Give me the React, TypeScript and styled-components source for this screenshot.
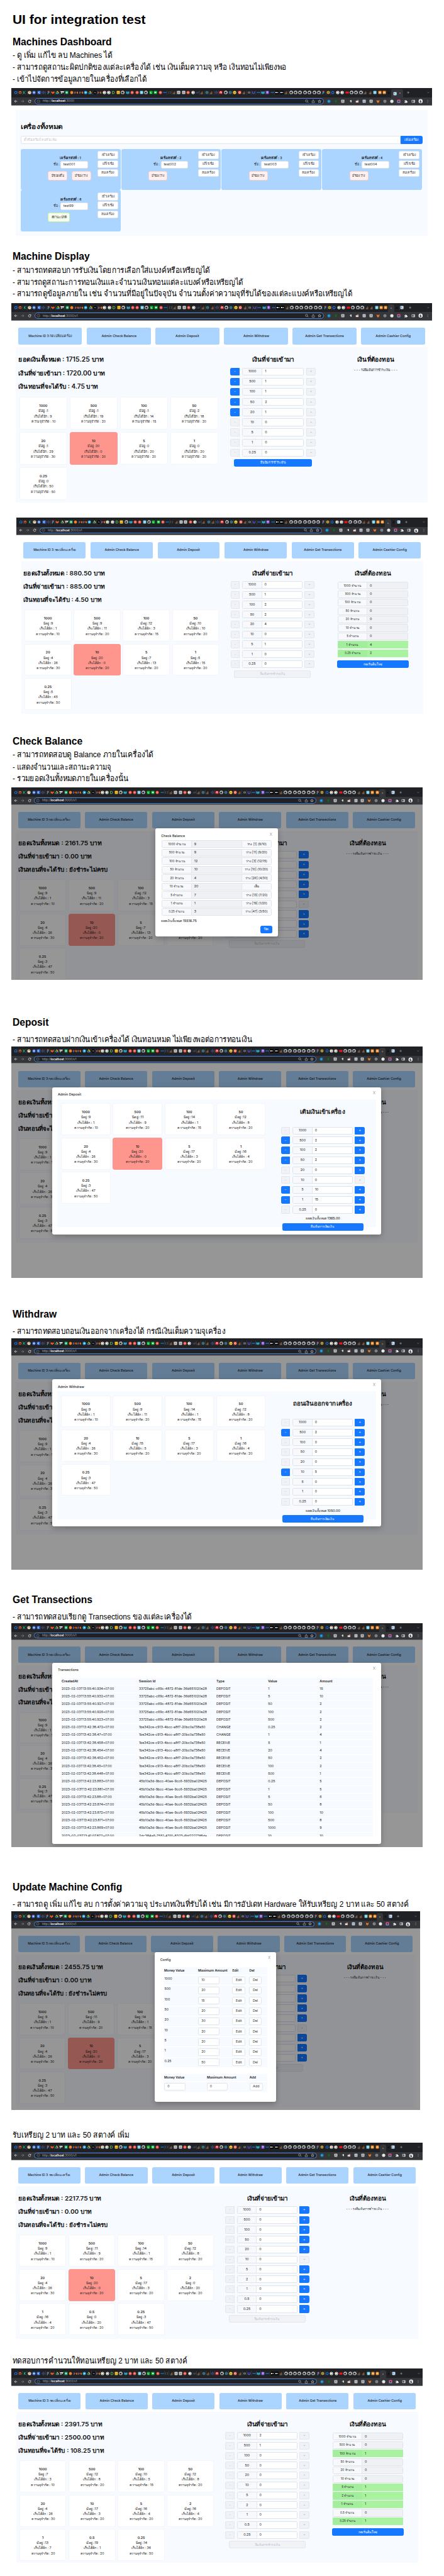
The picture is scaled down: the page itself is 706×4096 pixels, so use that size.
import React, { useLayoutEffect, useRef, useState } from "react";
import styled, { createGlobalStyle, css } from "styled-components";

/* document units: the page is designed on an 806px wide sheet */
const UNIT = 0.876;
const u = (n: number) => `${+(n * UNIT).toFixed(3)}px`;
/* browser-window units: --k horizontal, --v vertical size of one CSS pixel */
const s = (n: number) => `calc(${n} * var(--k))`;
const v = (n: number) => `calc(${n} * var(--v))`;

const Global = createGlobalStyle`
  *, *::before, *::after { box-sizing: border-box; }
  html, body { margin: 0; background: #fff; }
`;

/* ---------- text set to a given measure ---------- */
const Measured = styled.span<{ $left?: boolean }>`
  display: inline-block;
  flex: none;
  white-space: nowrap;
  transform-origin: ${(p) => (p.$left ? "left" : "center")} center;
`;
function Fit({ w, doc, left, children }: { w: number; doc?: boolean; left?: boolean; children: React.ReactNode }) {
  const ref = useRef<HTMLSpanElement>(null);
  const [ratio, setRatio] = useState(1);
  useLayoutEffect(() => {
    const el = ref.current;
    if (!el) return;
    const range = document.createRange();
    range.selectNodeContents(el);
    const old = el.style.transform;
    el.style.transform = "none";
    const natural = range.getBoundingClientRect().width;
    el.style.transform = old;
    const unit = doc ? UNIT : parseFloat(getComputedStyle(el).getPropertyValue("--k"));
    if (natural > 0 && unit > 0) setRatio((w * unit) / natural);
  }, [w, doc]);
  return (
    <Measured ref={ref} $left={left} style={{ transform: `scaleX(${ratio})` }}>
      {children}
    </Measured>
  );
}

/* ---------- document ---------- */
const Page = styled.main`
  width: ${u(806)};
  height: 4096px;
  overflow: hidden;
  padding: ${u(20)} 0 0 ${u(20)};
  display: flex;
  flex-direction: column;
  align-items: flex-start;
  font-family: "Liberation Sans", Arial, sans-serif;
  color: #000;
`;
const Title = styled.h1`
  margin: 0 0 0 ${u(2.6)};
  height: ${u(30)};
  line-height: ${u(30)};
  font-size: ${u(24)};
  flex: none;
  white-space: nowrap;
`;
const HeadingBox = styled.h2<{ $gap: number }>`
  margin: ${(p) => u(p.$gap)} 0 0 ${u(2.6)};
  height: ${u(20)};
  line-height: ${u(20)};
  font-size: ${u(18)};
  flex: none;
  white-space: nowrap;
`;
const LineBox = styled.p<{ $gap: number }>`
  margin: ${(p) => u(p.$gap)} 0 0 ${u(2.4)};
  height: ${u(20)};
  line-height: ${u(20)};
  font-size: ${u(14.67)};
  flex: none;
  white-space: nowrap;
`;
interface TextProps {
  gap: number;
  w: number;
  children: React.ReactNode;
}
const Heading = ({ gap, w, children }: TextProps) => (
  <HeadingBox $gap={gap}>
    <Fit doc left w={w}>
      {children}
    </Fit>
  </HeadingBox>
);
const Line = ({ gap, w, children }: TextProps) => (
  <LineBox $gap={gap}>
    <Fit doc left w={w}>
      {children}
    </Fit>
  </LineBox>
);

/* ---------- browser window ---------- */
const Window = styled.section<{ $gap: number; $w: number; $h: number; $v?: number; $left?: number }>`
  --k: ${(p) => ((p.$w * UNIT) / 1728).toFixed(5)}px;
  --v: ${(p) => ((p.$v ?? p.$w / 1728) * UNIT).toFixed(5)}px;
  position: relative;
  flex: none;
  overflow: hidden;
  margin: ${(p) => u(p.$gap)} 0 0 ${(p) => u(p.$left ?? 0)};
  width: ${(p) => u(p.$w)};
  height: ${(p) => u(p.$h)};
  font-family: Inter, Roboto, sans-serif;
  font-size: ${s(14)};
  color: #222;
  display: flex;
  flex-direction: column;
`;
const TabStrip = styled.div`
  height: ${v(38)};
  flex: none;
  background: #202124;
  display: flex;
  align-items: center;
  padding-left: ${s(9)};
`;
const Favicons = styled.div<{ $w: number }>`
  width: ${(p) => s(p.$w)};
  display: flex;
  justify-content: space-between;
  align-items: center;
`;
const Glyph = styled.svg<{ $size: number }>`
  width: ${(p) => s(p.$size)};
  height: ${(p) => s(p.$size)};
  flex: none;
  display: block;
`;
const ActiveTab = styled.div<{ $w: number }>`
  width: ${(p) => s(p.$w)};
  height: ${v(32)};
  align-self: flex-end;
  border-radius: ${s(8)} ${s(8)} 0 0;
  background: #35363a;
  display: flex;
  align-items: center;
  justify-content: space-evenly;
`;
const TabTail = styled.div`
  flex: 1;
  display: flex;
  justify-content: space-between;
  padding: 0 ${s(12)} 0 ${s(16)};
`;
const Toolbar = styled.div`
  height: ${v(34)};
  flex: none;
  background: #35363a;
  border-bottom: 1px solid #77787b;
  display: flex;
  align-items: center;
  padding: 0 ${s(10)} ${v(1)} ${s(11)};
  gap: ${s(13)};
`;
const Address = styled.div`
  margin-left: ${s(-1)};
  width: ${s(1187)};
  height: ${v(26)};
  border: 1px solid #4d7fd6;
  border-radius: ${s(13)};
  background: #202124;
  display: flex;
  align-items: center;
  gap: ${s(10)};
  padding: 0 ${s(8)} 0 ${s(6)};
  color: #9aa0a6;
  font-size: ${s(13.5)};
  line-height: 1;
  white-space: nowrap;
  b { color: #fff; font-weight: 600; }
`;
const Url = styled.span`
  flex: 1;
`;
const Extensions = styled.div`
  flex: 1;
  display: flex;
  justify-content: space-between;
  align-items: center;
`;

const SO = (
  <g>
    <path d="M3 9v5h8V9" stroke="#9a8f88" strokeWidth="1.4" fill="none" />
    <path d="M5 11.5h5M5 9l5 1M6 6l4.500 2.500M8.500 3l3.500 4" stroke="#f48024" strokeWidth="1.400" />
  </g>
);
const GH = (
  <path
    d="M8 1.500a6.500 6.500 0 0 0-2 12.700v-2c-2 .4-2.300-1.200-2.800-1.600M10 14.200v-2.400c0-.8-.2-1.200-.5-1.500 2-.3 3.200-1.200 3.200-3.400 0-1-.3-1.600-.8-2.200.2-.6.100-1.300-.1-1.900-.8 0-1.500.5-2 .9a7 7 0 0 0-3.600 0c-.5-.4-1.200-.9-2-.9-.2.600-.3 1.300-.1 1.900-.5.600-.8 1.200-.8 2.200M10 14.200a6.500 6.500 0 0 0-2-12.700"
    fill="none"
    stroke="#f2f2f2"
    strokeWidth="2"
  />
);
const box = (fill: string, inner?: React.ReactNode) => (
  <g>
    <rect x="1.500" y="1.500" width="13" height="13" rx="2" fill={fill} />
    {inner}
  </g>
);
const disc = (fill: string, inner?: React.ReactNode) => (
  <g>
    <circle cx="8" cy="8" r="6.800" fill={fill} />
    {inner}
  </g>
);
const lines = (c: string) => <path d="M4 5.500h8M4 8h8M4 10.500h8" stroke={c} strokeWidth="1.300" />;

const ICONS: Record<string, React.ReactNode> = {
  swirl: <path d="M4 11a5 5 0 1 1 4 2.300V10M5.500 13H3" stroke="#1f7cf5" strokeWidth="2.600" fill="none" />,
  fire: (
    <g>
      <circle cx="8" cy="8" r="5" stroke="#e2592a" strokeWidth="2.600" fill="none" />
      <circle cx="8" cy="6" r="1.800" fill="#f7b26a" />
    </g>
  ),
  k: <path d="M4 2v12M12 2L5 8l7 6" stroke="#18b877" strokeWidth="2.400" fill="none" />,
  face: disc("#e8d8bf", <circle cx="9" cy="6" r="3" fill="#a7825f" />),
  blue: disc("#4b7fe8", <circle cx="8" cy="8" r="3" fill="#cfe0ff" />),
  share: box("#2f6fe8", <path d="M11 4L5 8l6 4" stroke="#fff" strokeWidth="1.800" fill="none" />),
  diamond: (
    <g>
      <path d="M8 1.500L14.500 8 8 14.500 1.500 8z" fill="none" stroke="#2e6fd2" strokeWidth="2" />
      <circle cx="8" cy="8" r="2" fill="#e23c48" />
    </g>
  ),
  figma: (
    <g>
      <rect x="4" y="1" width="4" height="5" rx="2" fill="#f24e1e" />
      <rect x="8" y="1" width="4" height="5" rx="2" fill="#ff7262" />
      <rect x="4" y="6" width="4" height="4.500" rx="2" fill="#a259ff" />
      <circle cx="10" cy="8.200" r="2.200" fill="#1abcfe" />
      <rect x="4" y="10.500" width="4" height="4.500" rx="2" fill="#0acf83" />
    </g>
  ),
  gitlab: (
    <g>
      <path d="M1 8.500L3.500 2l2 4.500h5l2-4.500L15 8.500 8 14.500z" fill="#fc6d26" />
      <path d="M5.500 6.500h5L8 14.500z" fill="#e24329" />
    </g>
  ),
  drive: (
    <g>
      <path d="M6 2h4l5 8.500h-4.500z" fill="#fbbc04" />
      <path d="M6 2l2 3.500L3.500 14 1 10.500z" fill="#1fa463" />
      <path d="M5 10.500h10L13 14H3z" fill="#4285f4" />
    </g>
  ),
  tt: <path d="M1 4h14M5 4v9M11 4v6" stroke="#f5f5f5" strokeWidth="3.200" />,
  sheet: box("#17a35e", <path d="M4 8h8M8 4v8" stroke="#fff" strokeWidth="2.200" />),
  hex: <path d="M8 1l6 3.500v7L8 15l-6-3.500v-7z" fill="#f58220" />,
  gmail: (
    <g>
      <path d="M2.500 13V4.500L8 9l5.500-4.500V13" fill="none" stroke="#ea4335" strokeWidth="2.400" />
      <path d="M2.500 13V5.500" stroke="#4285f4" strokeWidth="2.400" />
      <path d="M13.500 13V5.500" stroke="#fbbc04" strokeWidth="2.400" />
    </g>
  ),
  tele: disc("#2da5e1", <path d="M4 8l8-3-2 6-2-2z" fill="#fff" />),
  next: disc("#000", <path d="M6 11V5.500l4.500 5.500V5.500" stroke="#ccc" strokeWidth="1.200" fill="none" />),
  google: (
    <g>
      <circle cx="8" cy="8" r="6.800" fill="#fff" />
      <path d="M12 6A4.200 4.200 0 0 0 5 5" stroke="#ea4335" strokeWidth="2" fill="none" />
      <path d="M4.600 6a4.500 4.500 0 0 0 0 4" stroke="#fbbc04" strokeWidth="2" fill="none" />
      <path d="M5 11a4.200 4.200 0 0 0 6 .2" stroke="#34a853" strokeWidth="2" fill="none" />
      <path d="M8 8h4.500c0 1.500-.5 2.500-1.500 3.200" stroke="#4285f4" strokeWidth="2" fill="none" />
    </g>
  ),
  d: <path d="M4 3h4a5 5 0 0 1 0 10H4z" stroke="#6fcf5a" strokeWidth="2.200" fill="none" />,
  yellow: box("#ffc72c", <path d="M4 9h8" stroke="#a4750a" strokeWidth="2" />),
  gh: GH,
  book: <path d="M1.500 3l6.500 2v9.500L1.500 12zM14.500 3L8 5v9.500l6.500-2.500z" fill="#35b1cf" stroke="#1c6f8d" />,
  red: disc("#e4483d", <circle cx="8" cy="8" r="2.800" fill="none" stroke="#ffd3cd" strokeWidth="1.600" />),
  gopher: box("#74cfe8", <path d="M6 5v3M10 5v3M6 11h4" stroke="#fff" strokeWidth="1.800" />),
  green: box("#06b526", <path d="M6 5v6h4" stroke="#fff" strokeWidth="1.800" fill="none" />),
  line: box("#06c233", <rect x="4" y="5" width="8" height="5" rx="2" fill="#fff" />),
  dash: <path d="M1 8h14" stroke="#1b74c9" strokeWidth="3.400" />,
  brackets: <path d="M6 4H4v8h2M10 4h2v8h-2" stroke="#8d9095" strokeWidth="1.200" fill="none" />,
  so: SO,
  white: box("#e9e9e9", lines("#3a3a3a")),
  infinity: <path d="M3 4v8l3-4 3 4V4M9 12l4-8v8" stroke="#4a5f80" strokeWidth="1.400" fill="none" />,
  react: (
    <g fill="none" stroke="#4fa9c4" strokeWidth="1.100">
      <ellipse cx="8" cy="8" rx="6.500" ry="2.600" />
      <ellipse cx="8" cy="8" rx="6.500" ry="2.600" transform="rotate(60 8 8)" />
      <ellipse cx="8" cy="8" rx="6.500" ry="2.600" transform="rotate(120 8 8)" />
    </g>
  ),
  npm: box("#d80d0d", <path d="M5 12V5h6v7" stroke="#fff" strokeWidth="2.400" fill="none" />),
  sun: disc("#f3cd3a", <path d="M4 9h8" stroke="#6d5b12" strokeWidth="2" />),
  reddit: box("#e0392b", <circle cx="8" cy="8" r="3.600" fill="none" stroke="#fff" strokeWidth="2" />),
  gray: <path d="M4 5h8v6H4zM8 5v6" stroke="#a5a8ad" strokeWidth="1.500" fill="none" />,
  u: <path d="M4 3v6a4 4 0 0 0 8 0V3" stroke="#5f55e8" strokeWidth="3" fill="none" />,
  purple: box("#8152d9", <path d="M8 4v8M5 7l3-3 3 3" stroke="#fff" strokeWidth="1.800" fill="none" />),
  medium: (
    <g>
      <rect x="0" y="1" width="16" height="14" fill="#000" />
      <circle cx="5" cy="8" r="3" fill="#fff" />
      <circle cx="11.500" cy="8" r="2.200" fill="#fff" />
    </g>
  ),
  grad: <circle cx="8" cy="8" r="5" stroke="#e8922c" strokeWidth="3" fill="#35a852" />,
  yt: <rect x="1" y="4" width="14" height="8.500" rx="2" fill="#f01414" />,
  orange: box("#f28a1c", <path d="M8 4v3M5 11V8h6v3" stroke="#fff" strokeWidth="1.900" fill="none" />),
  dark: <path d="M3 12l5-8 5 8z" fill="#101012" />,
  paper: box("#cfe6fb", <path d="M5 11V5l6 6" stroke="#2f73c0" strokeWidth="1.700" fill="none" />),
  globe: disc("#147eb8", <path d="M4 8l4-4 3 5-4 3z" fill="#30b4e6" />),
  down: <path d="M5 2h6v6h3l-6 6-6-6h3z" fill="#0b6e17" />,
  lens: box("#c9c9c9", <path d="M5 12l3-8 3 8" stroke="#4a4a4a" strokeWidth="1.500" fill="none" />),
  bird: <path d="M2 6l5 1 1-4h5v9H9V9z" fill="#dedede" />,
  tv: <path d="M2 6h11v7H2zM6 3h7v3" fill="#efe7e4" stroke="#b56d5f" />,
  kit: box("#c2cad6", <path d="M4 5l2 6 2-5 2 5 2-6" stroke="#6a7686" fill="none" />),
  fox: <path d="M2 2l5 3h2l5-3-1 8-3 4H6l-3-4z" fill="#e27625" />,
  ring: <circle cx="8" cy="8" r="5.500" fill="#77797d" stroke="#b9bbbe" strokeWidth="1.400" />,
  snow: disc("#e6e6e6"),
  color: (
    <g>
      {box("#eb4b7b", <path d="M2 14V4l6 10zM8 14h6V8z" fill="#25a9f0" />)}
      <rect x="5.500" y="5.500" width="5" height="5" fill="#35363a" />
    </g>
  ),
  puzzle: <path d="M2 5h4a2 2 0 1 1 4 0h3v4a2 2 0 1 1 0 3v2H3v-4a2 2 0 1 0 0-2z" fill="#e8eaed" />,
  panel: <path d="M2.500 3.500h11v9h-11zM10 3.500v9h3.500v-9z" stroke="#e8eaed" strokeWidth="1.800" fill="none" />,
  avatar: disc("#eceff1", <path d="M7 3l2 3 2 6-5 2-1-6z" fill="#4a4f57" />),
  dots: <path d="M8 2.500v2M8 7v2M8 11.500v2" stroke="#bdc1c6" strokeWidth="2" />,
  back: <path d="M14 8H3M8 3L3 8l5 5" stroke="#dee1e6" strokeWidth="2" fill="none" />,
  fwd: <path d="M2 8h11M8 3l5 5-5 5" stroke="#85878b" strokeWidth="1.800" fill="none" />,
  reload: <path d="M13 9a5 5 0 1 1-1.500-4.500L13 6V2.500M13 6H9.500" stroke="#dee1e6" strokeWidth="2" fill="none" />,
  info: <path d="M8 7v4M8 4.500v1M14 8A6 6 0 1 1 2 8a6 6 0 0 1 12 0z" stroke="#9aa0a6" strokeWidth="1.200" fill="none" />,
  zoom: <path d="M10 10l4 4M11 6.500a4.500 4.500 0 1 1-9 0 4.500 4.500 0 0 1 9 0z" stroke="#bdc1c6" strokeWidth="1.700" fill="none" />,
  upload: <path d="M5 7H3v7h10V7h-2M8 10V2M5.500 4L8 2l2.500 2" stroke="#bdc1c6" strokeWidth="1.500" fill="none" />,
  star: <path d="M8 2l1.800 4 4.200.400-3.200 2.800 1 4.300L8 11.200l-3.800 2.300 1-4.300L2 6.400 6.200 6z" stroke="#dee1e6" strokeWidth="1.500" fill="none" />,
  close: <path d="M4 4l8 8M12 4l-8 8" stroke="#c4c7cc" strokeWidth="1.500" />,
  plus: <path d="M8 1.500v13M1.500 8h13" stroke="#dee1e6" strokeWidth="1.800" />,
  chevron: <path d="M3 6l5 5 5-5" stroke="#c4c7cc" strokeWidth="2" fill="none" />,
};
const Icon = ({ name, size = 16 }: { name: string; size?: number }) => (
  <Glyph viewBox="0 0 16 16" $size={size} aria-hidden>
    {ICONS[name]}
  </Glyph>
);

const TABS =
  "swirl fire k face blue share diamond figma gitlab drive tt sheet hex gmail gmail tele drive next gmail google google d yellow gh book red red gopher gh green line red dash brackets so white white red google infinity so react so diamond npm gh react sun reddit so gray u dash book purple dash medium medium so gh gh gh gh gh gh gh figma grad swirl google google yt gh gh gh so so gopher orange orange".split(
    " "
  );
const SEPARATED = new Set([0, 1, 2, 5, 6, 7, 8, 9, 10, 16, 17, 18, 32, 33, 34, 39, 40, 41, 42, 43, 46, 49, 50, 51, 52, 53, 55, 58, 65, 66, 67, 73, 74]);
const EXT = "globe down lens bird tv kit lens fox ring snow color puzzle panel avatar dots".split(" ");

const TabSlot = styled.span<{ $line?: boolean }>`
  flex: 1;
  display: flex;
  justify-content: center;
  align-items: center;
  height: ${v(18)};
  ${(p) =>
    p.$line &&
    css`
      background: linear-gradient(#4c4e52, #4c4e52) right center / 0.5px 100% no-repeat;
    `}
`;

function Chrome({ path = "" }: { path?: string }) {
  const home = path === "";
  return (
    <>
      <TabStrip>
        <Favicons $w={home ? 1550 : 1538}>
          {(home ? [...TABS, "dark"] : TABS).map((t, i) => (
            <TabSlot key={i} $line={SEPARATED.has(i)}>
              <Icon name={t} />
            </TabSlot>
          ))}
        </Favicons>
        <ActiveTab $w={home ? 50 : 26}>
          {home && <Icon name="paper" />}
          <Icon name="close" size={11} />
        </ActiveTab>
        {!home && (
          <Favicons $w={42}>
            <TabSlot $line>
              <Icon name="dark" />
            </TabSlot>
            <TabSlot>
              <Icon name="paper" />
            </TabSlot>
          </Favicons>
        )}
        <TabTail>
          <Icon name="plus" size={11} />
          <Icon name="chevron" size={10} />
        </TabTail>
      </TabStrip>
      <Toolbar>
        <Icon name="back" />
        <Icon name="fwd" />
        <Icon name="reload" />
        <Address>
          <Icon name="info" />
          <Url>
            <Fit left w={home ? 129 : 144}>
              http://<b>localhost</b>:3000{path}
            </Fit>
          </Url>
          <Icon name="zoom" />
          <Icon name="upload" />
          <Icon name="star" />
        </Address>
        <Extensions>
          {EXT.map((e, i) => (
            <Icon key={i} name={e} size={e === "avatar" ? 20 : 16} />
          ))}
        </Extensions>
      </Toolbar>
    </>
  );
}

/* ---------- controls ---------- */
const Button = styled.button<{ $kind?: "primary" | "off" | "plain"; $w?: number; $side?: "l" | "r" }>`
  width: ${(p) => (p.$w ? s(p.$w) : "auto")};
  height: ${v(32)};
  flex: none;
  padding: 0;
  font: inherit;
  line-height: 1;
  white-space: nowrap;
  display: flex;
  align-items: center;
  justify-content: center;
  border: 1px solid #e3e6ea;
  border-radius: ${(p) => (p.$side === "l" ? `${s(6)} 0 0 ${s(6)}` : p.$side === "r" ? `0 ${s(6)} ${s(6)} 0` : s(6))};
  background: #fff;
  color: #333;
  ${(p) =>
    p.$kind === "primary" &&
    css`
      border-color: #1677ff;
      background: #1677ff;
      color: #fff;
    `}
  ${(p) =>
    p.$kind === "off" &&
    css`
      background: #f0f2f6;
      color: #b9bbbf;
    `}
`;
const Field = styled.div<{ $w?: number; $off?: boolean }>`
  width: ${(p) => (p.$w ? s(p.$w) : "auto")};
  flex: ${(p) => (p.$w ? "none" : 1)};
  height: ${v(32)};
  padding: 0 ${s(10)};
  border: 1px solid #e1e4e9;
  border-radius: ${s(6)};
  background: ${(p) => (p.$off ? "#f0f2f6" : "#fff")};
  display: flex;
  align-items: center;
  line-height: 1;
  font-weight: 400;
  color: #333;
`;
const Group = styled.div<{ $w: number; $mark?: boolean }>`
  width: ${(p) => s(p.$w)};
  height: ${v(32)};
  flex: none;
  display: flex;
  border: 1px solid ${(p) => (p.$mark ? "#a9f3a0" : "#e0e3e8")};
  border-radius: ${(p) => (p.$mark ? "0" : s(6))};
  overflow: hidden;
  background: ${(p) => (p.$mark ? "#a9f3a0" : "#fff")};
`;
const Addon = styled.span<{ $w: number; $right?: boolean; $mark?: boolean }>`
  width: ${(p) => s(p.$w)};
  display: flex;
  align-items: center;
  justify-content: center;
  line-height: 1;
  white-space: nowrap;
  background: ${(p) => (p.$mark ? "#a3ee9c" : "#f7f9fc")};
  ${(p) => (p.$right ? "border-left" : "border-right")}: 1px solid ${(p) => (p.$mark ? "#a3ee9c" : "#e3e6ea")};
`;
const GroupValue = styled.span<{ $off?: boolean }>`
  flex: 1;
  display: flex;
  align-items: center;
  padding-left: ${s(10)};
  line-height: 1;
  background: ${(p) => (p.$off ? "#f0f1f5" : "transparent")};
`;

/* ---------- machines dashboard ---------- */
const Dash = styled.div`
  margin: ${v(18)} ${s(20)} 0;
  flex: 1;
  background: #f7faff;
  padding: ${v(46)} ${s(20)} 0;
  display: flex;
  flex-direction: column;
`;
const DashTitle = styled.h3`
  margin: 0;
  font-size: ${s(25)};
  height: ${v(44)};
  line-height: ${v(44)};
  font-weight: 600;
  color: #111;
`;
const SearchRow = styled.div`
  margin-top: ${v(17)};
  display: flex;
`;
const Search = styled(Field)`
  color: #c0c3c8;
  border-radius: ${s(6)} 0 0 ${s(6)};
`;
const MachineGrid = styled.div`
  margin-top: ${v(20)};
  display: grid;
  grid-template-columns: repeat(4, ${s(412)});
  grid-auto-rows: ${v(170)};
`;
const Machine = styled.article`
  margin: 0 ${s(2.5)} ${v(2)} 0;
  border-radius: ${s(8)};
  background: #abd5ff;
  display: flex;
  padding: ${v(10)} ${s(9)} 0 ${s(112)};
`;
const MachineBody = styled.div`
  width: ${s(203)};
  padding-top: ${v(18)};
  display: flex;
  flex-direction: column;
`;
const MachineName = styled.div<{ $strong?: boolean }>`
  width: ${s(184)};
  display: flex;
  justify-content: center;
  align-items: center;
  gap: ${s(3)};
  height: ${(p) => v(p.$strong ? 22 : 32)};
  line-height: 1;
  font-weight: ${(p) => (p.$strong ? 600 : 400)};
  white-space: nowrap;
`;
const Badges = styled.div`
  margin-top: ${v(9)};
  display: flex;
  gap: ${s(20)};
`;
const Badge = styled.span<{ $ok?: boolean }>`
  width: ${(p) => s(p.$ok ? 90 : 78)};
  height: ${v(40)};
  display: flex;
  align-items: center;
  justify-content: center;
  line-height: 1;
  white-space: nowrap;
  border-radius: ${s(8)};
  border: 1px solid ${(p) => (p.$ok ? "#c9f0a4" : "#f8cfcd")};
  background: ${(p) => (p.$ok ? "#f6ffed" : "#fff1f0")};
`;
const Actions = styled.div`
  display: flex;
  flex-direction: column;
  gap: ${v(4.5)};
`;

const FULL = "มีช่องเต็ม";
const EMPTY = "มีช่องว่าง";
const OK = "สถานะปกติ";
const BADGE_W: Record<string, number> = { [FULL]: 54, [EMPTY]: 52, [OK]: 64 };
const MACHINES: [number, string, string[]][] = [
  [1, "test001", [FULL, EMPTY]],
  [2, "test002", [EMPTY]],
  [3, "test003", [EMPTY]],
  [4, "test004", [EMPTY]],
  [8, "test99", [OK]],
];

function Dashboard() {
  return (
    <Dash>
      <DashTitle>
        <Fit left w={171}>
          เครื่องทั้งหมด
        </Fit>
      </DashTitle>
      <SearchRow>
        <Search>
          <Fit left w={136}>
            ตั้งชื่อเครื่องใหม่ที่จะเพิ่ม
          </Fit>
        </Search>
        <Button $kind="primary" $w={89} $side="r">
          <Fit w={58}>เพิ่มเครื่อง</Fit>
        </Button>
      </SearchRow>
      <MachineGrid>
        {MACHINES.map(([id, name, flags]) => (
          <Machine key={id}>
            <MachineBody>
              <MachineName $strong>
                <Fit w={87}>เครื่องรหัสที่ : {id}</Fit>
              </MachineName>
              <MachineName>
                <Fit w={24}>ชื่อ :</Fit>
                <Field $w={113}>{name}</Field>
              </MachineName>
              <Badges>
                {flags.map((f) => (
                  <Badge key={f} $ok={f === OK}>
                    <Fit w={BADGE_W[f]}>{f}</Fit>
                  </Badge>
                ))}
              </Badges>
            </MachineBody>
            <Actions>
              <Button $w={85}>
                <Fit w={54}>เข้าเครื่อง</Fit>
              </Button>
              <Button $w={85}>
                <Fit w={47}>แก้ไขชื่อ</Fit>
              </Button>
              <Button $w={85}>
                <Fit w={52}>ลบเครื่อง</Fit>
              </Button>
            </Actions>
          </Machine>
        ))}
      </MachineGrid>
    </Dash>
  );
}

/* ---------- machine display ---------- */
type Slot = [string, number, number, number];
type Pay = [string, number, boolean, boolean];

const Nav = styled.nav`
  margin: ${v(29.5)} ${s(20)} 0;
  flex: none;
  display: grid;
  grid-template-columns: repeat(6, 1fr);
`;
const NavItem = styled.div`
  margin: 0 ${s(10)};
  height: ${v(70)};
  border-radius: ${s(6)};
  background: #abd5ff;
  display: flex;
  align-items: center;
  justify-content: center;
  font-weight: 500;
  line-height: 1;
  white-space: nowrap;
  color: #1d1d1d;
`;
const Panel = styled.div`
  margin: ${v(10.5)} ${s(20)} 0;
  height: ${v(641)};
  flex: none;
  background: #f7faff;
  display: grid;
  grid-template-columns: 2fr 1fr 1fr;
`;
const Column = styled.div<{ $center?: boolean }>`
  padding-top: ${v(23)};
  padding-left: ${(p) => (p.$center ? 0 : s(10))};
  display: flex;
  flex-direction: column;
  align-items: ${(p) => (p.$center ? "center" : "stretch")};
`;
const Figure = styled.h3`
  margin: 0;
  height: ${v(56)};
  line-height: ${v(56)};
  font-size: ${s(25)};
  font-weight: 600;
  color: #111;
  white-space: nowrap;
`;
const SlotGrid = styled.div<{ $w: number }>`
  padding: ${v(12.5)} 0 0 ${s(4)};
  display: grid;
  grid-template-columns: repeat(4, ${(p) => s(p.$w)});
  grid-auto-rows: ${v(134)};
  gap: ${v(10)} ${s(9.5)};
`;
const SlotCard = styled.div<{ $full: boolean }>`
  padding-top: ${v(23)};
  border-radius: ${s(8)};
  border: 1px solid ${(p) => (p.$full ? "#ff968e" : "#f3f5f8")};
  background: ${(p) => (p.$full ? "#ff968e" : "#fff")};
  text-align: center;
  white-space: nowrap;
`;
const SlotLine = styled.div<{ $strong?: boolean }>`
  height: ${v(21.7)};
  line-height: ${v(21.7)};
  font-weight: ${(p) => (p.$strong ? 600 : 400)};
`;
const PayRow = styled.div`
  height: ${v(41.6)};
  flex: none;
  display: flex;
  align-items: center;
`;
const Minus = styled(Button)`
  margin-right: ${s(11)};
`;
const Plus = styled(Button)`
  margin-left: ${s(8)};
`;
const ResultRow = styled.div`
  height: ${v(35.6)};
  flex: none;
`;
const Note = styled.div`
  margin-top: ${v(4)};
  height: ${v(22)};
  line-height: ${v(22)};
  white-space: nowrap;
`;
const Spacer = styled.div<{ $h: number }>`
  height: ${(p) => v(p.$h)};
  flex: none;
`;

const wide = (n: number) => (n > 9 ? 8 : 0);
const Slots = ({ slots, w = 197 }: { slots: Slot[]; w?: number }) => (
  <SlotGrid $w={w}>
    {slots.map(([d, have, left, cap]) => (
      <SlotCard key={d} $full={left === 0}>
        <SlotLine $strong>{d}</SlotLine>
        <SlotLine>
          <Fit w={41 + wide(have)}>มีอยู่ :{have}</Fit>
        </SlotLine>
        <SlotLine>
          <Fit w={73 + wide(left)}>เก็บได้อีก : {left}</Fit>
        </SlotLine>
        <SlotLine>
          <Fit w={100}>ความจุจำกัด : {cap}</Fit>
        </SlotLine>
      </SlotCard>
    ))}
  </SlotGrid>
);
const Pays = ({ rows }: { rows: Pay[] }) => (
  <>
    {rows.map(([d, n, minus, plus]) => (
      <PayRow key={d}>
        <Minus $w={38} $side="l" $kind={minus ? "primary" : "off"}>
          -
        </Minus>
        <Group $w={254}>
          <Addon $w={81}>{d}</Addon>
          <GroupValue>{n}</GroupValue>
        </Group>
        <Plus $w={41} $side="r" $kind={plus ? "primary" : "off"}>
          +
        </Plus>
      </PayRow>
    ))}
  </>
);
const Count = ({ of }: { of: string }) => <Fit w={44 + of.replace(".", "").length * 7.4}>{of} จำนวน</Fit>;

const NAV: [string, number][] = [
  ["Machine ID 3 กดเปลี่ยนเครื่อง", 180],
  ["Admin Check Balance", 144],
  ["Admin Deposit", 97],
  ["Admin Withdraw", 106],
  ["Admin Get Transections", 159],
  ["Admin Cashier Config", 144],
];

interface DisplayProps {
  total: [string, number];
  paid: [string, number];
  change: [string, number];
  slots: Slot[];
  pays: Pay[];
  ready?: boolean;
  result?: [string, number][];
}
function Display({ total, paid, change, slots, pays, ready, result }: DisplayProps) {
  return (
    <>
      <Nav>
        {NAV.map(([n, w]) => (
          <NavItem key={n}>
            <Fit w={w}>{n}</Fit>
          </NavItem>
        ))}
      </Nav>
      <Panel>
        <Column>
          <Figure>
            <Fit left w={total[1]}>
              ยอดเงินทั้งหมด : {total[0]} บาท
            </Fit>
          </Figure>
          <Figure>
            <Fit left w={paid[1]}>
              เงินที่จ่ายเข้ามา : {paid[0]} บาท
            </Fit>
          </Figure>
          <Figure>
            <Fit left w={change[1]}>
              เงินทอนที่จะได้รับ : {change[0]}
            </Fit>
          </Figure>
          <Slots slots={slots} />
        </Column>
        <Column $center>
          <Figure>
            <Fit w={171}>เงินที่จ่ายเข้ามา</Fit>
          </Figure>
          <Pays rows={pays} />
          <PayRow>
            <Button $w={321} $kind={ready ? "primary" : "off"}>
              <Fit w={104}>ยืนยันการชำระเงิน</Fit>
            </Button>
          </PayRow>
        </Column>
        <Column $center>
          <Figure>
            <Fit w={152}>เงินที่ต้องทอน</Fit>
          </Figure>
          {result ? (
            <>
              <Spacer $h={8} />
              {result.map(([d, n]) => (
                <ResultRow key={d}>
                  <Group $w={295} $mark={n > 0}>
                    <Addon $w={122} $mark={n > 0}>
                      <Count of={d} />
                    </Addon>
                    <GroupValue $off={n === 0}>{n}</GroupValue>
                  </Group>
                </ResultRow>
              ))}
              <Spacer $h={10} />
              <Button $w={302} $kind="primary">
                <Fit w={78}>กดเริ่มต้นใหม่</Fit>
              </Button>
            </>
          ) : (
            <Note>
              <Fit w={178}>- - - รอยืนยันการชำระเงิน - - -</Fit>
            </Note>
          )}
        </Column>
      </Panel>
    </>
  );
}

/* ---------- modal ---------- */
const Overlay = styled.div`
  position: absolute;
  inset: ${v(72)} 0 0 0;
  background: rgba(0, 0, 0, 0.41);
  display: flex;
  justify-content: center;
  align-items: flex-start;
  padding-top: ${v(99)};
`;
const Modal = styled.div<{ $w: number; $h: number }>`
  width: ${(p) => s(p.$w)};
  height: ${(p) => v(p.$h)};
  padding: ${v(20)} ${s(24)} 0;
  border-radius: ${s(8)};
  background: #fff;
  box-shadow: 0 ${v(6)} ${s(24)} rgba(0, 0, 0, 0.25);
  display: flex;
  flex-direction: column;
`;
const ModalHead = styled.div`
  display: flex;
  justify-content: space-between;
  height: ${v(22)};
  line-height: ${v(22)};
  font-weight: 500;
  flex: none;
`;
const CloseMark = styled.span`
  font-weight: 300;
  margin-top: ${v(-6)};
  color: #777;
  font-size: ${s(16)};
`;
const Centered = styled.div`
  display: flex;
  flex-direction: column;
  align-items: center;
`;
const Total = styled.div`
  height: ${v(32)};
  line-height: ${v(32)};
  font-weight: 500;
  white-space: nowrap;
`;
const ModalFoot = styled.div`
  display: flex;
  justify-content: flex-end;
  margin-top: ${v(5)};
`;
const AdminPanel = styled.div`
  margin: ${v(9)} ${s(-2)} 0;
  height: ${v(537)};
  background: #f7faff;
  display: grid;
  grid-template-columns: ${s(892)} 1fr;
`;
const AdminSlots = styled.div`
  padding: ${v(4)} 0 0 ${s(12)};
`;
const AdminForm = styled.div`
  display: flex;
  flex-direction: column;
  align-items: center;
`;
const AdminTitle = styled.h3`
  margin: ${v(24)} 0 ${v(30)};
  height: ${v(56)};
  line-height: ${v(56)};
  font-size: ${s(25)};
  font-weight: 600;
  white-space: nowrap;
`;

const BALANCE: [string, number, string, number][] = [
  ["1000", 9, "ว่าง [1] (9/10)", 83],
  ["500", 9, "ว่าง [11] (9/20)", 90],
  ["100", 12, "ว่าง [3] (12/15)", 90],
  ["50", 10, "ว่าง [10] (10/20)", 98],
  ["20", 4, "ว่าง [26] (4/30)", 94],
  ["10", 20, "เต็ม", 21],
  ["5", 7, "ว่าง [13] (7/20)", 90],
  ["1", 1, "ว่าง [19] (1/20)", 90],
  ["0.25", 3, "ว่าง [47] (3/50)", 93],
];
const BalanceModal = () => (
  <Overlay>
    <Modal $w={514} $h={454}>
      <ModalHead>
        Check Balance<CloseMark>X</CloseMark>
      </ModalHead>
      <Spacer $h={8.5} />
      <Centered>
        {BALANCE.map(([d, n, t, w]) => (
          <ResultRow key={d}>
            <Group $w={460}>
              <Addon $w={123}>
                <Count of={d} />
              </Addon>
              <GroupValue $off>{n}</GroupValue>
              <Addon $w={123} $right>
                <Fit w={w}>{t}</Fit>
              </Addon>
            </Group>
          </ResultRow>
        ))}
      </Centered>
      <Total>
        <Fit left w={150}>
          ยอดเงินทั้งหมด 15516.75
        </Fit>
      </Total>
      <ModalFoot>
        <Button $w={50} $kind="primary">
          <Fit w={18}>ปิด</Fit>
        </Button>
      </ModalFoot>
    </Modal>
  </Overlay>
);

interface AdminProps {
  title: string;
  heading: string;
  headingWidth: number;
  slots: Slot[];
  pays: Pay[];
  total: string;
}
const AdminModal = ({ title, heading, headingWidth, slots, pays, total }: AdminProps) => (
  <Overlay>
    <Modal $w={1382} $h={619}>
      <ModalHead>
        {title}
        <CloseMark>X</CloseMark>
      </ModalHead>
      <AdminPanel>
        <AdminSlots>
          <Slots slots={slots} w={207.5} />
        </AdminSlots>
        <AdminForm>
          <AdminTitle>
            <Fit w={headingWidth}>{heading}</Fit>
          </AdminTitle>
          <Pays rows={pays} />
          <Total>
            <Fit w={145}>ยอดเงินทั้งหมด {total}</Fit>
          </Total>
          <Spacer $h={4} />
          <Button $w={340} $kind="primary">
            <Fit w={98}>ยืนยันการเติมเงิน</Fit>
          </Button>
        </AdminForm>
      </AdminPanel>
    </Modal>
  </Overlay>
);

const TxTable = styled.div`
  margin: ${v(23.5)} ${s(11)} 0 ${s(13)};
  height: ${v(687)};
  overflow: hidden;
  display: flex;
  flex-direction: column;
`;
const TxRow = styled.div<{ $head?: boolean }>`
  flex: none;
  height: ${(p) => v(p.$head ? 29 : 30.6)};
  margin-bottom: ${v(3)};
  padding-left: ${s(3)};
  background: #f7faff;
  display: grid;
  grid-template-columns: ${s(325)} ${s(325)} ${s(217)} ${s(217)} 1fr;
  align-items: center;
  line-height: 1;
  white-space: nowrap;
  font-weight: ${(p) => (p.$head ? 600 : 400)};
`;
const TX: [string, string, string, string, number][] = [
  ["13:55:40.934", "33725abc-c69c-4872-81de-36d651020e28", "DEPOSIT", "1", 15],
  ["13:55:40.932", "33725abc-c69c-4872-81de-36d651020e28", "DEPOSIT", "5", 10],
  ["13:55:40.927", "33725abc-c69c-4872-81de-36d651020e28", "DEPOSIT", "50", 2],
  ["13:55:40.926", "33725abc-c69c-4872-81de-36d651020e28", "DEPOSIT", "100", 2],
  ["13:55:40.923", "33725abc-c69c-4872-81de-36d651020e28", "DEPOSIT", "500", 2],
  ["13:42:38.472", "1be342ce-c913-4bcc-a8f7-20bc0a738e50", "CHANGE", "0.25", 2],
  ["13:42:38.47", "1be342ce-c913-4bcc-a8f7-20bc0a738e50", "CHANGE", "1", 4],
  ["13:42:38.458", "1be342ce-c913-4bcc-a8f7-20bc0a738e50", "RECEIVE", "5", 1],
  ["13:42:38.454", "1be342ce-c913-4bcc-a8f7-20bc0a738e50", "RECEIVE", "20", 4],
  ["13:42:38.452", "1be342ce-c913-4bcc-a8f7-20bc0a738e50", "RECEIVE", "50", 2],
  ["13:42:38.45", "1be342ce-c913-4bcc-a8f7-20bc0a738e50", "RECEIVE", "100", 2],
  ["13:42:38.448", "1be342ce-c913-4bcc-a8f7-20bc0a738e50", "RECEIVE", "500", 1],
  ["13:42:23.883", "45b10a3d-9bcc-40ae-9cc6-5932ba02f425", "DEPOSIT", "0.25", 5],
  ["13:42:23.881", "45b10a3d-9bcc-40ae-9cc6-5932ba02f425", "DEPOSIT", "1", 5],
  ["13:42:23.88", "45b10a3d-9bcc-40ae-9cc6-5932ba02f425", "DEPOSIT", "5", 6],
  ["13:42:23.874", "45b10a3d-9bcc-40ae-9cc6-5932ba02f425", "DEPOSIT", "50", 8],
  ["13:42:23.872", "45b10a3d-9bcc-40ae-9cc6-5932ba02f425", "DEPOSIT", "100", 10],
  ["13:42:23.871", "45b10a3d-9bcc-40ae-9cc6-5932ba02f425", "DEPOSIT", "500", 8],
  ["13:42:23.869", "45b10a3d-9bcc-40ae-9cc6-5932ba02f425", "DEPOSIT", "1000", 9],
  ["13:41:07.872", "2dc384a6-7551-4310-8323-6bf22273f8da", "DEPOSIT", "10", 10],
];
const TransactionModal = () => (
  <Overlay>
    <Modal $w={1382} $h={785}>
      <ModalHead>
        Transections<CloseMark>X</CloseMark>
      </ModalHead>
      <TxTable>
        <TxRow $head>
          <span>CreatedAt</span>
          <span>Session Id</span>
          <span>Type</span>
          <span>Value</span>
          <span>Amount</span>
        </TxRow>
        {TX.map(([time, id, type, value, amount]) => (
          <TxRow key={time}>
            <span>
              <Fit left w={time.length < 12 ? 211 : 220}>
                2023-02-03T{time}+07:00
              </Fit>
            </span>
            <span>
              <Fit left w={id[0] === "1" ? 279 : 285}>
                {id}
              </Fit>
            </span>
            <span>{type}</span>
            <span>{value}</span>
            <span>{amount}</span>
          </TxRow>
        ))}
      </TxTable>
    </Modal>
  </Overlay>
);

const ConfigTable = styled.div<{ $gap: number }>`
  margin: ${(p) => v(p.$gap)} ${s(14)} 0;
  flex: none;
`;
const ConfigRow = styled.div<{ $cols: number[]; $head?: boolean }>`
  height: ${(p) => v(p.$head ? 31 : 41)};
  margin-bottom: ${v(2.2)};
  padding-left: ${s(4)};
  background: #f7faff;
  display: grid;
  grid-template-columns: ${(p) => p.$cols.map((c) => s(c)).join(" ")} 1fr;
  align-items: center;
  line-height: 1;
  white-space: nowrap;
  font-weight: ${(p) => (p.$head ? 600 : 400)};
`;
const TopValue = styled.span`
  align-self: start;
  margin-top: ${v(8)};
`;
const LIMITS: [string, number][] = [["1000", 10], ["500", 20], ["100", 15], ["50", 20], ["20", 30], ["10", 20], ["5", 20], ["1", 20], ["0.25", 50]];
const COLS = [143.5, 143.5, 72];
const ADD_COLS = [179.5, 180];
const ConfigModal = () => (
  <Overlay>
    <Modal $w={515} $h={630}>
      <ModalHead>
        Config<CloseMark>X</CloseMark>
      </ModalHead>
      <ConfigTable $gap={22}>
        <ConfigRow $cols={COLS} $head>
          <Fit left w={86}>Money Value</Fit>
          <Fit left w={124}>Maximum Amount</Fit>
          <span>Edit</span>
          <span>Del</span>
        </ConfigRow>
        {LIMITS.map(([d, n]) => (
          <ConfigRow key={d} $cols={COLS}>
            <TopValue>{d}</TopValue>
            <Field $w={89}>{n}</Field>
            <Button $w={55}>Edit</Button>
            <Button $w={51}>Del</Button>
          </ConfigRow>
        ))}
      </ConfigTable>
      <ConfigTable $gap={26}>
        <ConfigRow $cols={ADD_COLS} $head>
          <Fit left w={86}>Money Value</Fit>
          <Fit left w={124}>Maximum Amount</Fit>
          <span>Add</span>
        </ConfigRow>
        <ConfigRow $cols={ADD_COLS}>
          <Field $w={89}>0</Field>
          <Field $w={89}>0</Field>
          <Button $w={57}>Add</Button>
        </ConfigRow>
      </ConfigTable>
    </Modal>
  </Overlay>
);

/* ---------- data ---------- */
const D9 = ["1000", "500", "100", "50", "20", "10", "5", "1", "0.25"];
const D11 = ["1000", "500", "100", "50", "20", "10", "5", "2", "1", "0.5", "0.25"];
const CAP: Record<string, number> = { "1000": 10, "500": 20, "100": 15, "50": 20, "20": 30, "10": 20, "5": 20, "2": 20, "1": 20, "0.5": 20, "0.25": 50 };
const slotsOf = (ds: string[], have: number[]): Slot[] => ds.map((d, i) => [d, have[i], CAP[d] - have[i], CAP[d]]);
const paysOf = (ds: string[], n: number[], minus: boolean, plus: boolean | "room"): Pay[] =>
  ds.map((d, i) => [d, n[i], minus && n[i] > 0, plus === "room" ? d !== "10" : plus]);
const zeros = (n: number) => Array<number>(n).fill(0);

const IDLE = slotsOf(D9, [9, 9, 12, 10, 4, 20, 7, 1, 3]);
const STOCKED = slotsOf(D9, [9, 11, 14, 12, 4, 20, 17, 16, 3]);
const NOT_PAID: [string, number] = ["0.00", 308];
const WAIT: [string, number] = ["ยังชำระไม่ครบ", 376];
const idle9 = paysOf(D9, zeros(9), false, "room");
const IdleDisplay = () => <Display total={["2161.75", 349]} paid={NOT_PAID} change={WAIT} slots={IDLE} pays={idle9} />;

export default function App() {
  return (
    <Page>
      <Global />
      <Title>
        <Fit doc left w={241.5}>
          UI for integration test
        </Fit>
      </Title>

      <Heading gap={16} w={180}>Machines Dashboard</Heading>
      <Line gap={4} w={181}>- ดู เพิ่ม แก้ไข ลบ Machines ได้</Line>
      <Line gap={2.3} w={497}>- สามารถดูสถานะผิดปกติของแต่ละเครื่องได้ เช่น เงินเต็มความจุ หรือ เงินทอนไม่เพียงพอ</Line>
      <Line gap={1} w={243}>- เข้าไปจัดการข้อมูลภายในเครื่องที่เลือกได้</Line>
      <Window $gap={6.7} $w={764.7} $h={268.3}>
        <Chrome />
        <Dashboard />
      </Window>

      <Heading gap={27.7} w={140}>Machine Display</Heading>
      <Line gap={4.3} w={358}>- สามารถทดสอบการรับเงินโดยการเลือกใส่แบงค์หรือเหรียญได้</Line>
      <Line gap={2} w={418.5}>- สามารถดูสถานะการทอนเงินและจำนวนเงินทอนแต่ละแบงค์หรือเหรียญได้</Line>
      <Line gap={0.4} w={616.5}>- สามารถดูข้อมูลภายใน เช่น จำนวนที่มีอยู่ในปัจจุบัน จำนวนตั้งค่าความจุที่รับได้ของแต่ละแบงค์หรือเหรียญได้</Line>
      <Window $gap={7.3} $w={764.7} $h={362.7}>
        <Chrome path="/v1" />
        <Display
          total={["1715.25", 348.5]}
          paid={["1720.00", 354.5]}
          change={["4.75 บาท", 325.5]}
          slots={slotsOf(D9, [1, 1, 1, 2, 1, 20, 0, 0, 0])}
          pays={paysOf(D9, [1, 1, 1, 2, 1, 0, 0, 0, 0], true, false)}
          ready
        />
      </Window>
      <Window $gap={27.3} $w={747} $h={356} $left={9.8}>
        <Chrome path="/v1" />
        <Display
          total={["880.50", 342.5]}
          paid={["885.00", 342.5]}
          change={["4.50 บาท", 328]}
          slots={slotsOf(D9, [9, 9, 12, 10, 4, 20, 7, 5, 5])}
          pays={paysOf(D9, [0, 1, 2, 2, 4, 0, 1, 0, 0], false, false)}
          result={D9.map((d, i) => [d, [0, 0, 0, 0, 0, 0, 0, 4, 2][i]])}
        />
      </Window>

      <Heading gap={40} w={127}>Check Balance</Heading>
      <Line gap={4.3} w={255.5}>- สามารถทดสอบดู Balance ภายในเครื่องได้</Line>
      <Line gap={2.4} w={179.5}>- แสดงจำนวนและสถานะความจุ</Line>
      <Line gap={1} w={210.5}>- รวมยอดเงินทั้งหมดภายในเครื่องนั้น</Line>
      <Window $gap={6.3} $w={746.6} $h={349.3}>
        <Chrome path="/v1" />
        <IdleDisplay />
        <BalanceModal />
      </Window>

      <Heading gap={66.4} w={65.5}>Deposit</Heading>
      <Line gap={11.6} w={435}>- สามารถทดสอบฝากเงินเข้าเครื่องได้ เงินทอนหมด ไม่เพียงพอต่อการทอนเงิน</Line>
      <Window $gap={2.7} $w={746.6} $h={420}>
        <Chrome path="/v1" />
        <IdleDisplay />
        <AdminModal
          title="Admin Deposit"
          heading="เติมเงินเข้าเครื่อง"
          headingWidth={189}
          slots={STOCKED}
          pays={paysOf(D9, [0, 2, 2, 2, 0, 0, 10, 15, 0], true, "room")}
          total="1365.00"
        />
      </Window>

      <Heading gap={56} w={80}>Withdraw</Heading>
      <Line gap={11} w={386}>- สามารถทดสอบถอนเงินออกจากเครื่องได้ กรณีเงินเต็มความจุเครื่อง</Line>
      <Window $gap={3} $w={746.6} $h={420}>
        <Chrome path="/v1" />
        <IdleDisplay />
        <AdminModal
          title="Admin Withdraw"
          heading="ถอนเงินออกจากเครื่อง"
          headingWidth={251}
          slots={slotsOf(D9, [9, 9, 14, 12, 4, 15, 17, 16, 3])}
          pays={paysOf(D9, [0, 2, 0, 0, 0, 5, 0, 0, 0], true, true)}
          total="1050.00"
        />
      </Window>

      <Heading gap={44.3} w={145}>Get Transections</Heading>
      <Line gap={10.4} w={325}>- สามารถทดสอบเรียกดู Transections ของแต่ละเครื่องได้</Line>
      <Window $gap={2.3} $w={746.6} $h={406.5} $v={0.4186}>
        <Chrome path="/v1" />
        <IdleDisplay />
        <TransactionModal />
      </Window>

      <Heading gap={62.5} w={199}>Update Machine Config</Heading>
      <Line gap={11} w={719.5}>- สามารถดู เพิ่ม แก้ไข ลบ การตั้งค่าความจุ ประเภทเงินที่รับได้ เช่น มีการอัปเดท Hardware ให้รับเหรียญ 2 บาท และ 50 สตางค์</Line>
      <Window $gap={3} $w={742} $h={360} $v={0.432}>
        <Chrome path="/v1" />
        <Display total={["2455.75", 357]} paid={NOT_PAID} change={WAIT} slots={STOCKED} pays={idle9} />
        <ConfigModal />
      </Window>

      <Line gap={35.3} w={211.5}>รับเหรียญ 2 บาท และ 50 สตางค์ เพิ่ม</Line>
      <Window $gap={4.7} $w={747.5} $h={356}>
        <Chrome path="/v1" />
        <Display
          total={["2217.75", 347]}
          paid={NOT_PAID}
          change={WAIT}
          slots={slotsOf(D11, [9, 11, 14, 12, 4, 20, 17, 0, 16, 0, 3])}
          pays={paysOf(D11, zeros(11), false, "room")}
        />
      </Window>

      <Line gap={29.3} w={317.5}>ทดสอบการคำนวนให้ทอนเหรียญ 2 บาท และ 50 สตางค์</Line>
      <Window $gap={4.7} $w={747} $h={352} $left={0.5}>
        <Chrome path="/v1" />
        <Display
          total={["2391.75", 352]}
          paid={["2500.00", 359]}
          change={["108.25 บาท", 359]}
          slots={slotsOf(D11, [7, 12, 10, 12, 4, 17, 16, 16, 13, 19, 14])}
          pays={paysOf(D11, [2, 1, 0, 0, 0, 0, 0, 0, 0, 0, 0], false, false)}
          result={D11.map((d, i) => [d, [0, 0, 1, 0, 0, 0, 1, 1, 1, 0, 1][i]])}
        />
      </Window>
    </Page>
  );
}
